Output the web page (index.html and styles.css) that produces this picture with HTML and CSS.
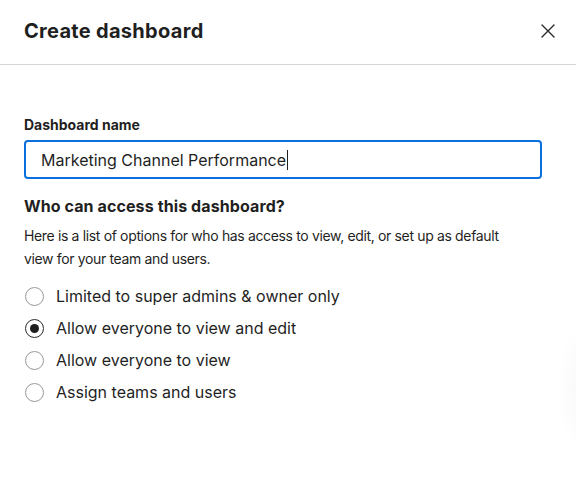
FILE: index.html
```html
<!DOCTYPE html>
<html lang="en">
<head>
<meta charset="utf-8">
<title>Create dashboard</title>
<link rel="stylesheet" href="styles.css">
</head>
<body>
<div class="dialog">
  <header class="dialog-header">
    <h1 class="dialog-title">Create dashboard</h1>
    <button class="close-btn" aria-label="Close">
      <svg width="16" height="16" viewBox="0 0 16 16"><path d="M2 2 L14 14 M14 2 L2 14" stroke="#2b2b2b" stroke-width="1.4" fill="none" stroke-linecap="round"/></svg>
    </button>
  </header>
  <main class="dialog-body">
    <label class="field-label" for="name">Dashboard name</label>
    <div class="text-input"><span class="input-value">Marketing Channel Performance</span><span class="caret"></span></div>
    <h2 class="section-title">Who can access this dashboard?</h2>
    <p class="section-text">Here is a list of options for who has access to view, edit, or set up as default view for your team and users.</p>
    <ul class="radio-list">
      <li class="radio-row"><span class="radio"></span><span>Limited to super admins &amp; owner only</span></li>
      <li class="radio-row"><span class="radio checked"></span><span>Allow everyone to view and edit</span></li>
      <li class="radio-row"><span class="radio"></span><span>Allow everyone to view</span></li>
      <li class="radio-row"><span class="radio"></span><span>Assign teams and users</span></li>
    </ul>
  </main>
  <div class="edge-shadow"></div>
</div>
</body>
</html>
```
FILE: styles.css
```css
* { box-sizing: border-box; }
html, body { margin: 0; padding: 0; background: #fff; }
body {
  font-family: "Inter", "Noto Sans", sans-serif;
  color: #1f1f1f;
  width: 576px;
  height: 493px;
  overflow: hidden;
}
.dialog { position: relative; height: 493px; overflow: hidden; }
.dialog-header {
  height: 65px;
  padding: 0 20px 0 24px;
  display: flex;
  align-items: center;
  justify-content: space-between;
  border-bottom: 1px solid #d4d4d4;
}
.dialog-title {
  margin: 0;
  font-size: 20px;
  font-weight: 700;
  letter-spacing: 0.3px;
  line-height: 24px;
  padding-bottom: 2px;
}
.close-btn {
  border: 0;
  background: none;
  padding: 0;
  width: 16px;
  height: 16px;
  display: flex;
  margin-bottom: 2px;
}
.dialog-body { padding: 50px 34px 0 24px; }
.field-label {
  display: block;
  font-size: 14px;
  font-weight: 700;
  line-height: 20px;
  margin-bottom: 5px;
}
.text-input {
  height: 39px;
  border: 2px solid #0b6fe0;
  border-radius: 4px;
  display: flex;
  align-items: center;
  padding: 0 15px;
  font-size: 16px;
  letter-spacing: 0;
}
.caret {
  display: inline-block;
  width: 1px;
  height: 20px;
  background: #1f1f1f;
  margin-left: 1px;
}
.section-title {
  margin: 15px 0 6px;
  font-size: 16px;
  font-weight: 700;
  line-height: 24px;
  letter-spacing: 0.1px;
}
.section-text {
  margin: 0 0 10px;
  max-width: 490px;
  font-size: 14px;
  line-height: 23px;
  letter-spacing: -0.35px;
}
.radio-list { list-style: none; margin: 0; padding: 0; }
.radio-row {
  height: 32px;
  display: flex;
  align-items: center;
  gap: 12px;
  font-size: 16px;
  padding-left: 1px;
}
.radio {
  width: 19px;
  height: 19px;
  border: 1px solid #9a9a9a;
  border-radius: 50%;
  display: flex;
  align-items: center;
  justify-content: center;
}
.radio.checked { border: 1.5px solid #2b2b2b; }
.radio.checked::after {
  content: "";
  width: 9px;
  height: 9px;
  border-radius: 50%;
  background: #1f1f1f;
}
.edge-shadow {
  position: absolute;
  right: -40px;
  top: 320px;
  width: 60px;
  height: 140px;
  border-radius: 50%;
  background: radial-gradient(ellipse at center, rgba(0,0,0,0.03), rgba(0,0,0,0) 70%);
}
```
